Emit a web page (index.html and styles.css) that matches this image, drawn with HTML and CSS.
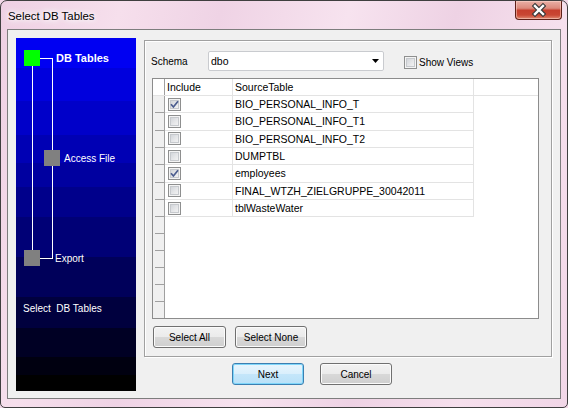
FILE: index.html
```html
<!DOCTYPE html>
<html>
<head>
<meta charset="utf-8">
<title>Select DB Tables</title>
<link rel="stylesheet" href="styles.css">
</head>
<body>
<div class="window">
  <div class="titlebar">
    <span class="title">Select DB Tables</span>
    <div class="close">
      <svg width="45" height="18" viewBox="0 0 45 18">
        <path d="M19 5 L27 13 M27 5 L19 13" stroke="#3a3a3a" stroke-width="4.6" stroke-linecap="square" fill="none"/>
        <path d="M19 5 L27 13 M27 5 L19 13" stroke="#ffffff" stroke-width="2.4" stroke-linecap="square" fill="none"/>
      </svg>
    </div>
  </div>
  <div class="client">
    <div class="wizard">
      <div class="wz-line l1"></div>
      <div class="wz-line l2"></div>
      <div class="wz-line l3"></div>
      <div class="wz-line l4"></div>
      <div class="sq sq-db"></div>
      <div class="sq sq-acc"></div>
      <div class="sq sq-exp"></div>
      <div class="wz-text t-db">DB Tables</div>
      <div class="wz-text t-acc">Access File</div>
      <div class="wz-text t-exp">Export</div>
      <div class="wz-text t-sel">Select  DB Tables</div>
    </div>
    <div class="main">
      <div class="group">
        <div class="schema-row">
          <span class="lbl">Schema</span>
          <div class="combo">
            <span>dbo</span>
            <svg class="arrow" width="7" height="4" viewBox="0 0 7 4"><polygon points="0,0 7,0 3.5,4" fill="#000"/></svg>
          </div>
          <label class="chk-wrap"><span class="cb"></span><span>Show Views</span></label>
        </div>
        <div class="grid">
          <div class="ghead">
            <div class="rh rh-head"></div>
            <div class="hc c-inc">Include</div>
            <div class="hc c-src">SourceTable</div>
          </div>
          <div class="row">
            <div class="rh"></div>
            <div class="cell c-inc"><span class="cb checked"><svg width="11" height="11" viewBox="0 0 11 11"><path d="M2 5.2 L4.4 8 L9 2.2" stroke="#4b5d8f" stroke-width="1.7" fill="none"/></svg></span></div>
            <div class="cell c-src">BIO_PERSONAL_INFO_T</div>
          </div>
          <div class="row">
            <div class="rh"></div>
            <div class="cell c-inc"><span class="cb"></span></div>
            <div class="cell c-src">BIO_PERSONAL_INFO_T1</div>
          </div>
          <div class="row">
            <div class="rh"></div>
            <div class="cell c-inc"><span class="cb"></span></div>
            <div class="cell c-src">BIO_PERSONAL_INFO_T2</div>
          </div>
          <div class="row">
            <div class="rh"></div>
            <div class="cell c-inc"><span class="cb"></span></div>
            <div class="cell c-src">DUMPTBL</div>
          </div>
          <div class="row">
            <div class="rh"></div>
            <div class="cell c-inc"><span class="cb checked"><svg width="11" height="11" viewBox="0 0 11 11"><path d="M2 5.2 L4.4 8 L9 2.2" stroke="#4b5d8f" stroke-width="1.7" fill="none"/></svg></span></div>
            <div class="cell c-src">employees</div>
          </div>
          <div class="row">
            <div class="rh"></div>
            <div class="cell c-inc"><span class="cb"></span></div>
            <div class="cell c-src">FINAL_WTZH_ZIELGRUPPE_30042011</div>
          </div>
          <div class="row">
            <div class="rh"></div>
            <div class="cell c-inc"><span class="cb"></span></div>
            <div class="cell c-src">tblWasteWater</div>
          </div>
          <div class="row empty"><div class="rh"></div></div>
          <div class="row empty"><div class="rh"></div></div>
          <div class="row empty"><div class="rh"></div></div>
          <div class="row empty"><div class="rh"></div></div>
          <div class="row empty"><div class="rh"></div></div>
          <div class="rest"><div class="rh rh-plain"></div></div>
        </div>
        <div class="btn-row">
          <div class="btn w73">Select All</div>
          <div class="btn w72">Select None</div>
        </div>
      </div>
      <div class="nav">
        <div class="btn btn-default w72">Next</div>
        <div class="btn w72">Cancel</div>
      </div>
    </div>
  </div>
</div>
</body>
</html>
```
FILE: styles.css
```css
html, body {
  margin: 0;
  padding: 0;
  overflow: hidden;
}
body {
  font-family: "Liberation Sans", Arial, sans-serif;
  font-size: 10px;
  color: #000;
  background: #f2d8e8;
}
.window {
  width: 568px;
  height: 408px;
  box-sizing: border-box;
  border: 1px solid #3f3f3f;
  border-radius: 7px 7px 5px 5px;
  background: linear-gradient(105deg, #eed0e3 0%, #f6dfec 18%, #efd3e5 33%, #f7e3ef 52%, #eed2e4 68%, #f6e0ed 84%, #f1d6e7 100%);
  overflow: hidden;
  display: flex;
  flex-direction: column;
}
.titlebar {
  height: 28px;
  flex: none;
  display: flex;
  align-items: flex-start;
  padding: 0 5px 0 7px;
}
.title {
  font-size: 11.4px;
  line-height: 14px;
  margin-top: 8px;
  text-shadow: 0 0 5px #fff, 0 0 8px #fff, 0 0 10px #fff;
}
.close {
  margin-left: auto;
  width: 47px;
  height: 19px;
  box-sizing: border-box;
  border: 1px solid #5e2018;
  border-top: none;
  border-radius: 0 0 4px 4px;
  background: linear-gradient(#eab0a6 0%, #dc8a7c 40%, #c63f2d 52%, #c94733 78%, #e08a72 100%);
  box-shadow: inset 0 0 0 1px rgba(255, 220, 210, 0.5);
}
.close svg {
  display: block;
}
.client {
  margin: 0 6px;
  height: 370px;
  box-sizing: border-box;
  border: 1px solid #7d7d7d;
  background: #f0f0f0;
  padding: 8px;
  display: flex;
  gap: 8px;
  flex: none;
}
.wizard {
  width: 120px;
  height: 353px;
  flex: none;
  position: relative;
  color: #fff;
  background: linear-gradient(to bottom,
    #0000f2 0px, #0000f2 30px,
    #0000dd 30px, #0000dd 63px,
    #0000c9 63px, #0000c9 97px,
    #0000b4 97px, #0000b4 125px,
    #0000a0 125px, #0000a0 149px,
    #00008b 149px, #00008b 179px,
    #000076 179px, #000076 219px,
    #00005a 219px, #00005a 259px,
    #00003e 259px, #00003e 290px,
    #000024 290px, #000024 319px,
    #000010 319px, #000010 337px,
    #000000 337px);
}
.wz-line {
  position: absolute;
  background: #fff;
}
.l1 { left: 24px; top: 20px; width: 13px; height: 1px; }
.l2 { left: 36px; top: 20px; width: 1px; height: 201px; }
.l3 { left: 16px; top: 28px; width: 1px; height: 184px; }
.l4 { left: 24px; top: 220px; width: 13px; height: 1px; }
.sq {
  position: absolute;
  width: 16px;
  height: 16px;
  background: #808080;
}
.sq-db { left: 8px; top: 12px; background: #00ff00; }
.sq-acc { left: 28px; top: 112px; }
.sq-exp { left: 8px; top: 212px; }
.wz-text {
  position: absolute;
  line-height: 14px;
  white-space: pre;
}
.t-db { left: 40px; top: 13px; font-weight: bold; font-size: 11px; }
.t-acc { left: 48px; top: 114px; }
.t-exp { left: 39px; top: 214px; }
.t-sel { left: 7px; top: 264px; }

.main {
  width: 408px;
  flex: none;
  display: flex;
  flex-direction: column;
}
.group {
  margin-top: 2px;
  height: 317px;
  box-sizing: border-box;
  border: 1px solid #a0a0a0;
  box-shadow: inset 1px 1px 0 #fff, 1px 1px 0 #fff;
  padding-top: 10px;
}
.schema-row {
  display: flex;
  align-items: center;
  height: 20px;
  padding-left: 6px;
}
.lbl {
  width: 57px;
  flex: none;
}
.combo {
  width: 176px;
  height: 20px;
  box-sizing: border-box;
  border: 1px solid #c9cbcf;
  border-radius: 2px;
  background: #fff;
  display: flex;
  align-items: center;
  padding: 0 4px 0 2px;
  font-size: 10.5px;
}
.arrow {
  margin-left: auto;
  display: block;
}
.chk-wrap {
  margin-left: 20px;
  display: flex;
  align-items: center;
  gap: 2px;
  margin-top: 2px;
}
.cb {
  width: 13px;
  height: 13px;
  box-sizing: border-box;
  border: 1px solid #8e8f8f;
  background: linear-gradient(135deg, #c9cdd3 0%, #e6e7e9 55%, #f8f8f8 100%);
  box-shadow: inset 0 0 0 1px #f4f4f4, inset 0 0 0 2px #c6c9cd;
  display: inline-block;
  flex: none;
  position: relative;
}
.cb svg {
  display: block;
  margin: 0;
}
.grid {
  margin: 7px 0 0 7px;
  width: 387px;
  height: 241px;
  box-sizing: border-box;
  border: 1px solid #8c8c8c;
  background: #fff;
  display: flex;
  flex-direction: column;
  overflow: hidden;
}
.ghead {
  display: flex;
  height: 17px;
  flex: none;
  box-sizing: border-box;
  border-bottom: 1px solid #e3e3e3;
}
.rh {
  width: 12px;
  flex: none;
  box-sizing: border-box;
  border-right: 1px solid #a0a0a0;
  background: linear-gradient(#a0a0a0, #a0a0a0) no-repeat 2px 100% / 9px 1px, #f0f0f0;
}
.rh-head {
  background: #fff;
}
.rh-plain {
  background: #f0f0f0;
}
.hc {
  box-sizing: border-box;
  padding-left: 2px;
  line-height: 16px;
  font-size: 10.5px;
  border-right: 1px solid #e3e3e3;
}
.c-inc { width: 68px; flex: none; }
.c-src { width: 241px; flex: none; }
.row {
  display: flex;
  height: 17.33px;
  flex: none;
}
.row.empty {
  height: 17px;
}
.rest {
  flex: 1;
  display: flex;
}
.cell {
  box-sizing: border-box;
  border-right: 1px solid #e3e3e3;
  border-bottom: 1px solid #e3e3e3;
  display: flex;
  align-items: center;
}
.cell.c-inc {
  padding-left: 3px;
}
.cell.c-src {
  padding-left: 2px;
  font-size: 10.5px;
  white-space: nowrap;
}
.btn-row {
  display: flex;
  gap: 9px;
  margin: 7px 0 0 8px;
}
.btn {
  box-sizing: border-box;
  height: 22px;
  border: 1px solid #707070;
  border-radius: 3px;
  background: linear-gradient(#f2f2f2 0%, #ebebeb 50%, #d8d8d8 52%, #cfcfcf 100%);
  box-shadow: inset 0 0 0 1px #fbfbfb;
  display: flex;
  align-items: center;
  justify-content: center;
  font-size: 10px;
  flex: none;
}
.w72 { width: 72px; }
.w73 { width: 73px; }
.btn-default {
  border-color: #3c7fb1;
  background: linear-gradient(#e8f5fd 0%, #d9effc 50%, #c4e6fa 52%, #b9e1f8 100%);
  box-shadow: inset 0 0 0 1px #7fd6fa;
}
.nav {
  margin-top: 6px;
  display: flex;
  gap: 16px;
  padding-left: 88px;
}
```
